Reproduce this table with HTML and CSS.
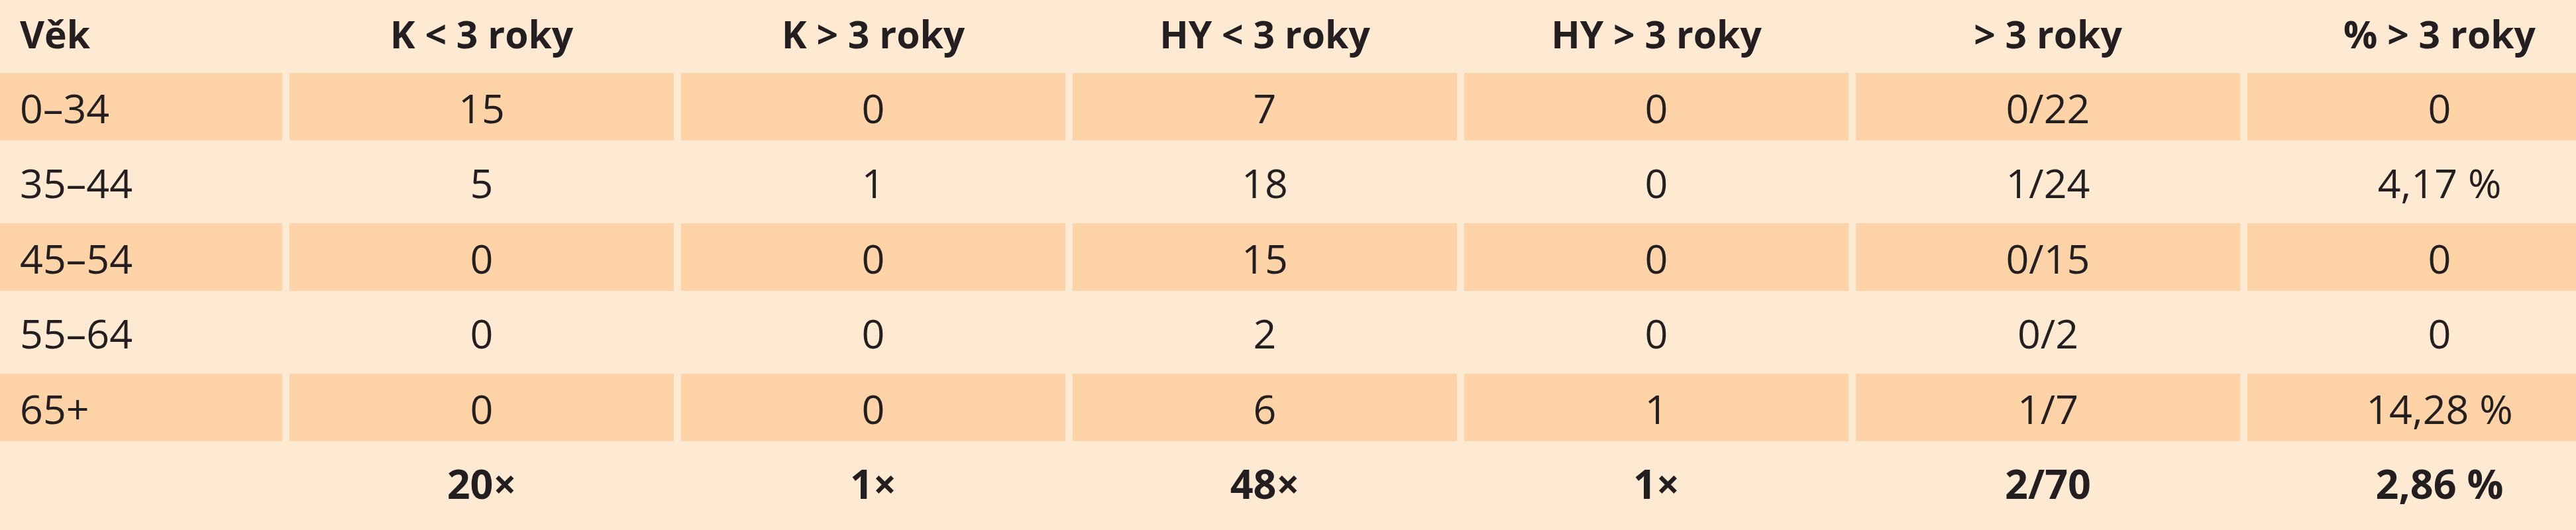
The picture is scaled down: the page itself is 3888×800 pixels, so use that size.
FILE: index.html
```html
<!DOCTYPE html>
<html lang="cs">
<head>
<meta charset="utf-8">
<title>Tabulka</title>
<link rel="stylesheet" href="styles.css">
</head>
<body>
<div class="table">
  <div class="row head">
    <div class="cell first">Věk</div>
    <div class="cell">K &lt; 3 roky</div>
    <div class="cell">K &gt; 3 roky</div>
    <div class="cell">HY &lt; 3 roky</div>
    <div class="cell">HY &gt; 3 roky</div>
    <div class="cell">&gt; 3 roky</div>
    <div class="cell">% &gt; 3 roky</div>
  </div>
  <div class="row band">
    <div class="cell first">0–34</div>
    <div class="cell">15</div>
    <div class="cell">0</div>
    <div class="cell">7</div>
    <div class="cell">0</div>
    <div class="cell">0/22</div>
    <div class="cell">0</div>
  </div>
  <div class="row">
    <div class="cell first">35–44</div>
    <div class="cell">5</div>
    <div class="cell">1</div>
    <div class="cell">18</div>
    <div class="cell">0</div>
    <div class="cell">1/24</div>
    <div class="cell">4,17 %</div>
  </div>
  <div class="row band">
    <div class="cell first">45–54</div>
    <div class="cell">0</div>
    <div class="cell">0</div>
    <div class="cell">15</div>
    <div class="cell">0</div>
    <div class="cell">0/15</div>
    <div class="cell">0</div>
  </div>
  <div class="row">
    <div class="cell first">55–64</div>
    <div class="cell">0</div>
    <div class="cell">0</div>
    <div class="cell">2</div>
    <div class="cell">0</div>
    <div class="cell">0/2</div>
    <div class="cell">0</div>
  </div>
  <div class="row band">
    <div class="cell first">65+</div>
    <div class="cell">0</div>
    <div class="cell">0</div>
    <div class="cell">6</div>
    <div class="cell">1</div>
    <div class="cell">1/7</div>
    <div class="cell">14,28 %</div>
  </div>
  <div class="row total">
    <div class="cell first"></div>
    <div class="cell">20×</div>
    <div class="cell">1×</div>
    <div class="cell">48×</div>
    <div class="cell">1×</div>
    <div class="cell">2/70</div>
    <div class="cell">2,86 %</div>
  </div>
</div>
</body>
</html>
```

FILE: styles.css
```css
html, body {
  margin: 0;
  padding: 0;
  overflow: hidden;
  background: #fee9d3;
}

body {
  width: 3888px;
  height: 800px;
  font-family: "Open Sans", "Liberation Sans", sans-serif;
  color: #231f20;
}

.table {
  display: flex;
  flex-direction: column;
  row-gap: 11.5px;
  width: 3972px;
}

.row {
  display: grid;
  grid-template-columns: 426px repeat(6, 580px);
  column-gap: 11px;
  height: 102px;
  font-size: 61px;
  line-height: 1;
}

.row.head {
  height: 98px;
  font-size: 57px;
  font-weight: 700;
}

.cell {
  display: flex;
  align-items: center;
  justify-content: center;
  padding-top: 3px;
  box-sizing: border-box;
  white-space: nowrap;
}

.cell.first {
  justify-content: flex-start;
  padding-left: 30px;
}

.head .cell {
  padding-top: 4px;
}

.band .cell {
  background: #fdd3a7;
}

.total .cell {
  font-weight: 700;
}
```
